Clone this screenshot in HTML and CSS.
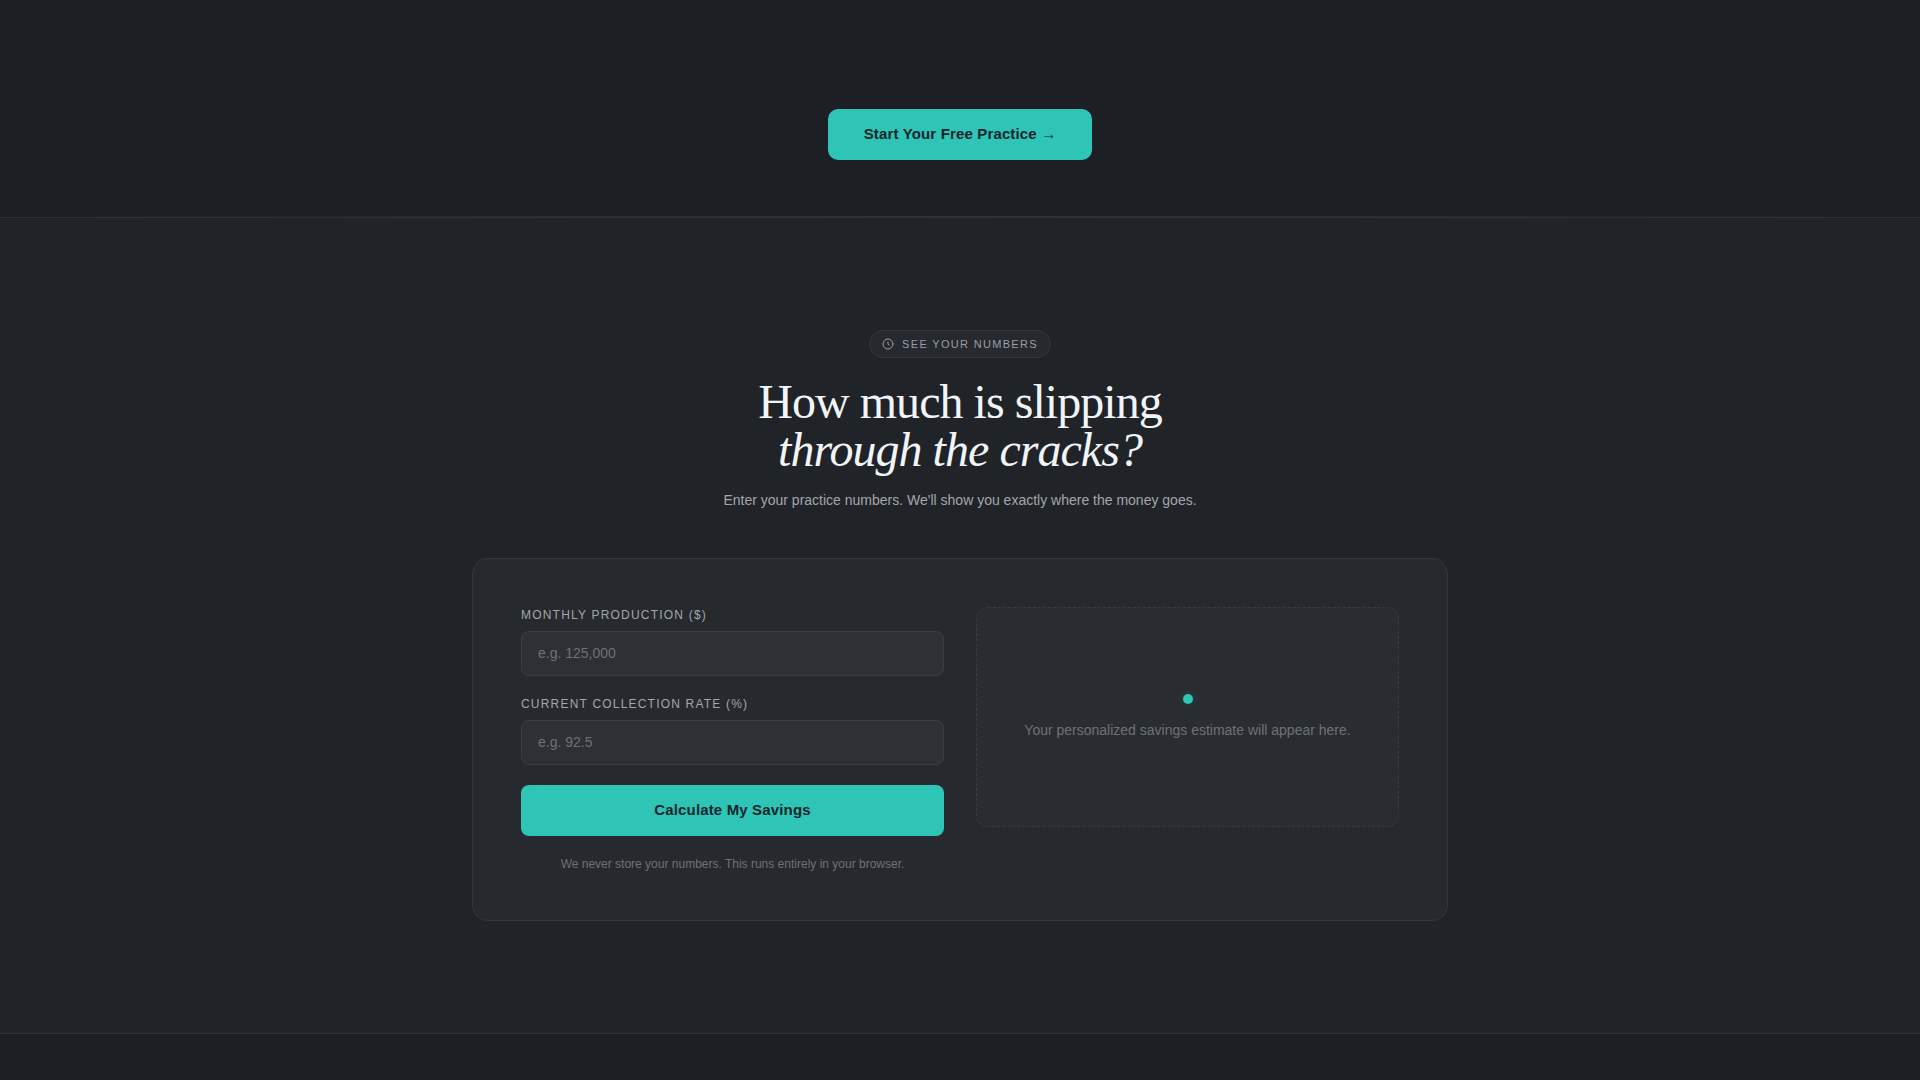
FILE: index.html
```html
<!DOCTYPE html>
<html lang="en">
<head>
    <meta charset="UTF-8">
    <meta name="viewport" content="width=device-width, initial-scale=1.0">
    <title>Savings Calculator</title>
    <link rel="stylesheet" href="styles.css">
</head>
<body>
    <section class="cta">
        <a href="#calculator" class="btn btn-cta">Start Your Free Practice →</a>
    </section>
    <div class="divider"></div>

    <section class="calculator" id="calculator">
        <div class="container">
            <div class="section-header">
                <span class="pill">
                    <svg class="pill-icon" width="12" height="12" viewBox="0 0 12 12" fill="none" stroke="currentColor" stroke-linecap="round">
                        <circle cx="6" cy="6" r="5"/>
                        <path d="M6 4v2l1 1.2"/>
                    </svg>
                    See your numbers
                </span>
                <h2>How much is slipping<br><em>through the cracks?</em></h2>
                <p class="subtitle">Enter your practice numbers. We'll show you exactly where the money goes.</p>
            </div>

            <div class="card">
                <form class="calc-form" id="calcForm">
                    <div class="field">
                        <label for="production">Monthly Production ($)</label>
                        <input type="text" id="production" inputmode="decimal" placeholder="e.g. 125,000">
                    </div>
                    <div class="field">
                        <label for="rate">Current Collection Rate (%)</label>
                        <input type="text" id="rate" inputmode="decimal" placeholder="e.g. 92.5">
                    </div>
                    <button type="submit" class="btn btn-submit">Calculate My Savings</button>
                    <p class="note">We never store your numbers. This runs entirely in your browser.</p>
                </form>
                <div class="result">
                    <span class="dot"></span>
                    <p id="resultText">Your personalized savings estimate will appear here.</p>
                </div>
            </div>
        </div>
    </section>

    <script>
        document.getElementById('calcForm').addEventListener('submit', function(e) {
            e.preventDefault();
            const production = parseFloat(document.getElementById('production').value.replace(/,/g, ''));
            const rate = parseFloat(document.getElementById('rate').value);
            if (production > 0 && rate >= 0 && rate <= 100) {
                const lost = Math.round(production * (100 - rate) / 100);
                document.getElementById('resultText').textContent = '$' + lost.toLocaleString() + ' uncollected per month.';
            }
        });
    </script>
</body>
</html>
```
FILE: styles.css
```css
* {
    box-sizing: border-box;
}
body {
    margin: 0;
    min-height: 100vh;
    background-color: #1c1f23;
    color: #f1f5f9;
    font-family: "Liberation Sans", Arial, sans-serif;
    font-size: 14px;
    line-height: 20px;
}
h2, p {
    margin: 0;
}
.container {
    max-width: 1040px;
    margin: 0 auto;
    padding: 0 32px;
}
.btn {
    display: block;
    border: none;
    background-color: #2ec4b6;
    color: #14262b;
    font-family: inherit;
    font-size: 15px;
    font-weight: bold;
    line-height: 17px;
    letter-spacing: 0.01em;
    text-align: center;
    text-decoration: none;
    cursor: pointer;
}
.btn:hover {
    background-color: #35d0c1;
}

/* top call to action */
.cta {
    display: flex;
    justify-content: center;
    padding: 109px 32px 56px;
}
.btn-cta {
    padding: 16px 36px 18px;
    border-radius: 10px;
}
.divider {
    height: 1px;
    background: linear-gradient(90deg, transparent, #303439, transparent);
}

/* calculator */
.calculator {
    padding: 112px 0;
    background-color: #202327;
    border-top: 1px solid #2e3236;
    border-bottom: 1px solid #2e3236;
}
.section-header {
    margin-bottom: 48px;
    text-align: center;
}
.pill {
    display: flex;
    align-items: center;
    gap: 8px;
    width: fit-content;
    margin: 0 auto 20px;
    padding: 5px 12px;
    border: 1px solid #33373b;
    border-radius: 14px;
    background-color: #26292e;
    color: #9a9ea4;
    font-size: 11px;
    line-height: 16px;
    letter-spacing: 0.12em;
    text-transform: uppercase;
}
h2 {
    margin-bottom: 16px;
    font-family: "Liberation Serif", "Times New Roman", serif;
    font-size: 48px;
    font-weight: normal;
    line-height: 48px;
    letter-spacing: -0.02em;
}
.subtitle {
    color: #a3a7ac;
}
.card {
    display: grid;
    grid-template-columns: 1fr 1fr;
    gap: 32px;
    align-items: start;
    padding: 48px;
    border: 1px solid #34383c;
    border-radius: 16px;
    background-color: #26292e;
}
.calc-form {
    display: flex;
    flex-direction: column;
    gap: 20px;
}
.field {
    display: flex;
    flex-direction: column;
    gap: 8px;
}
.field label {
    color: #a3a7ac;
    font-size: 12px;
    line-height: 16px;
    letter-spacing: 0.1em;
    text-transform: uppercase;
}
.field input {
    width: 100%;
    padding: 13px 16px 14px;
    border: 1px solid #3a3e43;
    border-radius: 8px;
    background-color: #2d3035;
    color: #f1f5f9;
    font-family: inherit;
    font-size: 14px;
    line-height: 16px;
    outline: none;
}
.field input:focus {
    border-color: #2ec4b6;
}
.field input::placeholder {
    color: #6e7278;
}
.btn-submit {
    width: 100%;
    padding: 16px 16px 18px;
    border-radius: 8px;
}
.note {
    color: #6e7278;
    font-size: 12px;
    line-height: 16px;
    text-align: center;
}
.result {
    display: flex;
    flex-direction: column;
    align-items: center;
    justify-content: center;
    gap: 16px;
    min-height: 220px;
    padding: 24px;
    border: 1px dashed #383c41;
    border-radius: 12px;
    background-color: #292c31;
    color: #6e7278;
    text-align: center;
}
.dot {
    width: 10px;
    height: 10px;
    border-radius: 50%;
    background-color: #2ec4b6;
    box-shadow: 0 0 8px rgba(46, 196, 182, 0.2);
}

@media (max-width: 760px) {
    .card {
        grid-template-columns: 1fr;
        padding: 24px;
    }
}
```
